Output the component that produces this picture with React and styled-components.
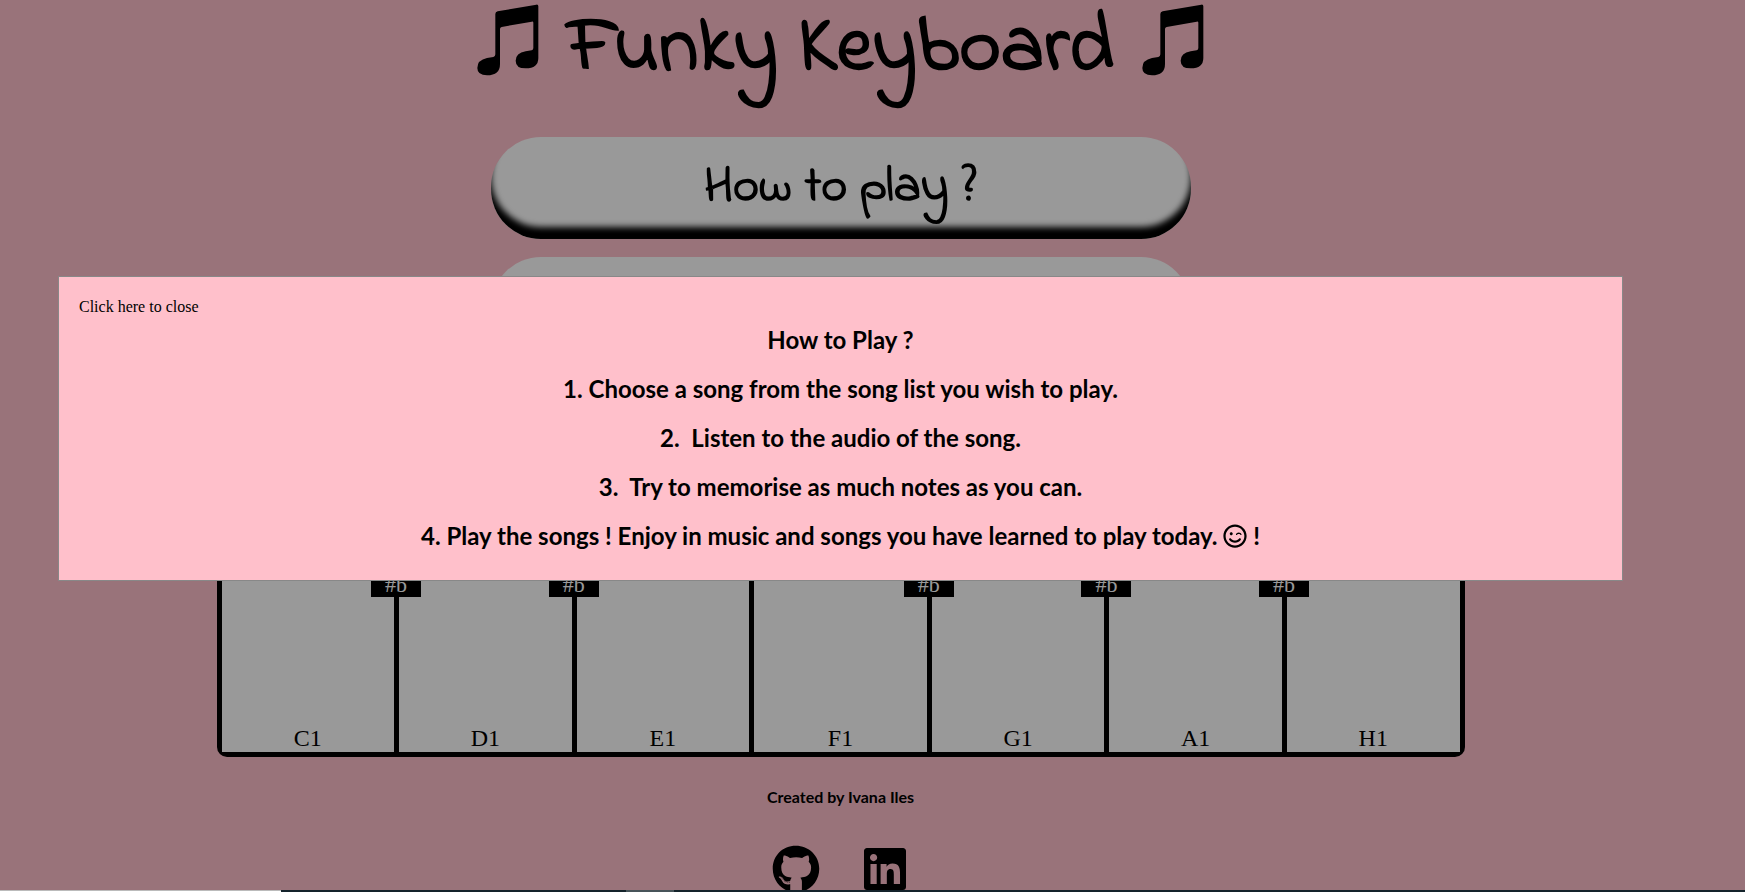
import React from "react";
import styled, { createGlobalStyle } from "styled-components";
import { FaGithub, FaLinkedin, FaRegSmileWink } from "react-icons/fa";

const GlobalStyle = createGlobalStyle`
  * { box-sizing: border-box; }
  body { margin: 0; background: #ffc0cb; color: #000; }
`;

const hand = `"Indie Flower", Lato, "Open Sans", cursive`;
const sans = `Lato, sans-serif`;
const serif = `"Liberation Serif", "Times New Roman", serif`;

const Page = styled.div`
  height: 100vh;
  overflow: hidden;
  padding-right: 64px;
  background: #ffc0cb;
`;

const Header = styled.header`
  display: flex;
  justify-content: center;
  align-items: flex-start;
  gap: 28px;
  height: 137px;
  padding-top: 4px;
`;

const Title = styled.h1`
  margin: 0;
  font: 700 80px/92px ${hand};
  white-space: nowrap;
`;

const NoteIcon = styled.svg`
  width: 62px;
  height: 72px;
  flex: none;
`;

const Menu = styled.nav`
  display: flex;
  flex-direction: column;
  align-items: center;
  gap: 18px;
`;

const MenuButton = styled.button`
  width: 700px;
  max-width: 90%;
  height: 102px;
  padding: 0;
  border: 0;
  border-radius: 50px;
  background: #fff;
  box-shadow: inset 0 -12px 6px #000;
  font: 700 50px/56px ${hand};
  color: #000;
`;

const Keyboard = styled.div`
  display: flex;
  gap: 5px;
  width: 1248px;
  max-width: 100%;
  height: 326px;
  margin: 72px auto 0;
  padding: 5px;
  border-radius: 10px;
  background: #000;
`;

const KeySlot = styled.div`
  position: relative;
  display: flex;
  flex: 1;
`;

const WhiteKey = styled.button`
  display: flex;
  flex: 1;
  align-items: flex-end;
  justify-content: center;
  padding: 0;
  border: 0;
  background: #fff;
  font: 400 24px/28px ${serif};
  color: #000;
`;

const BlackKey = styled.button`
  position: absolute;
  z-index: 1;
  top: 0;
  right: -27px;
  display: flex;
  align-items: flex-end;
  justify-content: center;
  width: 50px;
  height: 161px;
  padding: 0;
  border: 0;
  background: #000;
  font: 400 22px/24px ${serif};
  color: #fff;
`;

const Footer = styled.footer`
  display: flex;
  flex-direction: column;
  align-items: center;
  gap: 38px;
  padding-top: 30px;
`;

const Credit = styled.p`
  margin: 0;
  font: 700 16px/20px ${sans};
`;

const Socials = styled.div`
  display: flex;
  gap: 41px;
`;

const SocialLink = styled.a`
  display: flex;
  color: #000;
  font-size: 48px;
`;

const Overlay = styled.div`
  position: fixed;
  z-index: 2;
  inset: 0;
  padding: 276px 122px 0 58px;
  background: rgba(0, 0, 0, 0.4);
`;

const Dialog = styled.section`
  padding: 20px 20px 30px;
  border: 1px solid #888;
  background: #ffc0cb;
`;

const CloseButton = styled.button`
  display: block;
  padding: 0;
  border: 0;
  background: none;
  font: 400 16px/20px ${serif};
  color: #000;
`;

const Steps = styled.div`
  display: flex;
  flex-direction: column;
  gap: 20px;
  padding-top: 8px;
`;

const Step = styled.h2`
  margin: 0;
  font: 700 24px/29px ${sans};
  text-align: center;
  white-space: pre-wrap;
`;

const WinkIcon = styled(FaRegSmileWink)`
  width: 24px;
  height: 24px;
  vertical-align: -3px;
`;

const TaskBar = styled.div`
  position: fixed;
  z-index: 3;
  left: 0;
  right: 0;
  bottom: 0;
  display: flex;
  height: 2px;
  background: #14232b;
`;

const TaskSearch = styled.div`
  width: 281px;
  border-top: 1px solid #bbb;
  background: #fff;
`;

const TaskActive = styled.div`
  width: 48px;
  margin-left: 345px;
  background: #475459;
`;

const Notes = () => (
  <NoteIcon viewBox="50 10 186 216" aria-hidden="true">
    <path d="M105 40Q105 34 112 32L228 12Q234 11 234 17V172Q234 203 196 203Q166 203 166 180Q166 158 196 152L214 149Q219 148 219 142V66Q219 62 214 63L124 79Q119 80 119 85V190Q119 224 80 224Q51 224 51 202Q51 178 80 172L99 169Q105 168 105 161Z" />
  </NoteIcon>
);

const keys = [
  { note: "C1", sharp: true },
  { note: "D1", sharp: true },
  { note: "E1" },
  { note: "F1", sharp: true },
  { note: "G1", sharp: true },
  { note: "A1", sharp: true },
  { note: "H1" },
];

export default function App() {
  return (
    <>
      <GlobalStyle />
      <Page>
        <Header>
          <Notes />
          <Title>Funky Keyboard</Title>
          <Notes />
        </Header>
        <Menu>
          <MenuButton>How to play ?</MenuButton>
          <MenuButton aria-label="Song list" />
        </Menu>
        <Keyboard>
          {keys.map(({ note, sharp }) => (
            <KeySlot key={note}>
              <WhiteKey>{note}</WhiteKey>
              {sharp && <BlackKey>#b</BlackKey>}
            </KeySlot>
          ))}
        </Keyboard>
        <Footer>
          <Credit>Created by Ivana Iles</Credit>
          <Socials>
            <SocialLink href="#github" aria-label="GitHub"><FaGithub /></SocialLink>
            <SocialLink href="#linkedin" aria-label="LinkedIn"><FaLinkedin /></SocialLink>
          </Socials>
        </Footer>
      </Page>
      <Overlay>
        <Dialog role="dialog" aria-label="How to play">
          <CloseButton>Click here to close</CloseButton>
          <Steps>
            <Step>How to Play ?</Step>
            <Step>1. Choose a song from the song list you wish to play.</Step>
            <Step>{"2.  Listen to the audio of the song."}</Step>
            <Step>{"3.  Try to memorise as much notes as you can."}</Step>
            <Step>4. Play the songs ! Enjoy in music and songs you have learned to play today. <WinkIcon aria-hidden="true" /> !</Step>
          </Steps>
        </Dialog>
      </Overlay>
      <TaskBar>
        <TaskSearch />
        <TaskActive />
      </TaskBar>
    </>
  );
}
